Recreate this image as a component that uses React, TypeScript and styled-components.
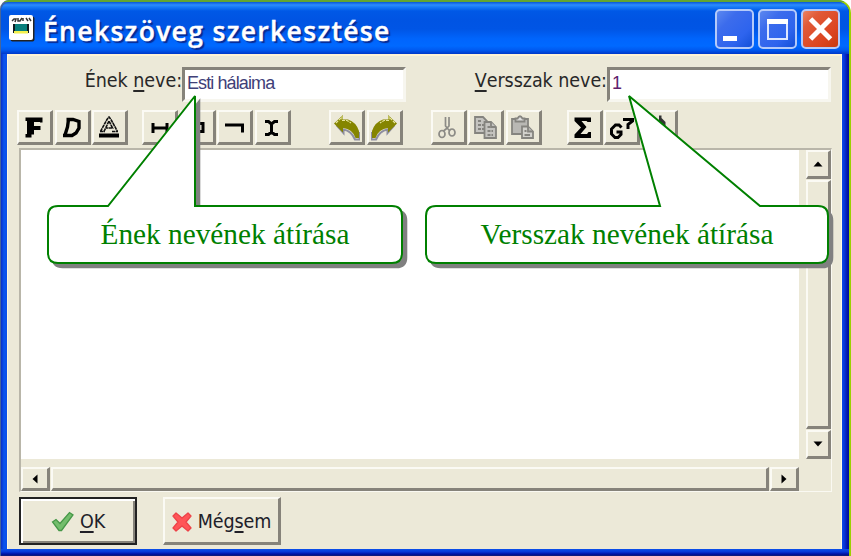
import React from "react";
import styled, { createGlobalStyle, css } from "styled-components";

const FACE = "#ece9d8";
const SHADE = "#86837a";

const GlobalStyle = createGlobalStyle`
  * { box-sizing: border-box; }
  body { margin: 0; overflow: hidden; background: #fff; }
  svg { display: block; flex: none; }
`;

const raised = css`
  background: ${FACE};
  border: solid;
  border-width: 2px 3px 3px 2px;
  border-color: #fbfaf4 ${SHADE} ${SHADE} #fbfaf4;
`;

const Frame = styled.div`
  position: relative;
  width: 851px;
  height: 556px;
  padding: 2px 2px 0 1px;
  background: linear-gradient(90deg, #47659a 0 50%, #9bd000 50%);
  border-radius: 9px 13px 0 0;
  overflow: hidden;
  &::before {
    content: "";
    position: absolute;
    inset: 0 0 auto 0;
    height: 2px;
    background: #63a532;
  }
`;

const Window = styled.div`
  position: relative;
  height: 554px;
  padding: 0 7px 7px 6px;
  border-radius: 9px 11px 0 0;
  background: linear-gradient(90deg, #0830c8 0, #0a55ee 3px, #0b50e8 6px, #0b50e8 50%, #0a50e8 840px, #0738de 843px, #0010a0 847px);
  overflow: hidden;
  &::after {
    content: "";
    position: absolute;
    inset: auto 0 0 0;
    height: 7px;
    background: linear-gradient(#0a50ea, #0838d8 40%, #0010a0 75%, #122070);
  }
`;

const TitleBar = styled.header`
  display: flex;
  align-items: center;
  height: 52px;
  margin: 0 -7px 0 -6px;
  padding: 1px 9px 0 8px;
  background: linear-gradient(#0857d8 0, #2c8cff 3px, #177af8 5px, #0058e6 9px, #0054e3 18px, #0055e5 27px, #0065fd 37px, #0069ff 44px, #005af0 48px, #0038c8 52px);
`;

const Title = styled.h1`
  flex: 1;
  margin: 4px 0 0 8px;
  font: 600 26.5px/40px "Open Sans", "Noto Sans", sans-serif;
  letter-spacing: 1.33px;
  color: #fff;
  -webkit-text-stroke: 0.4px #fff;
  text-shadow: 2px 2px 1px #082a92;
  white-space: nowrap;
`;

const WindowButtons = styled.div`
  display: flex;
  gap: 4px;
`;

const WindowButton = styled.button<{ $close?: boolean }>`
  display: grid;
  place-items: center;
  width: 39px;
  height: 40px;
  padding: 0;
  border: 2px solid #b4cafa;
  border-radius: 5px;
  background: ${(p) =>
    p.$close
      ? "linear-gradient(135deg, #ea8262 0, #e15a38 25%, #dc4520 70%, #c83a10 100%)"
      : "linear-gradient(135deg, #5c88f0 0, #3c6cec 30%, #2e64ee 70%, #1450d8 100%)"};
`;

const Client = styled.main`
  height: 495px;
  padding: 13px 9px 0 11px;
  border-top: 2px solid #fff3d5;
  border-left: 1px solid #fff8df;
  border-right: 1px solid #fff8df;
  background: ${FACE};
`;

const Fields = styled.div`
  display: flex;
  height: 35px;
  margin-top: -2px;
`;

const Field = styled.div<{ $lead: number }>`
  display: flex;
  padding-left: ${(p) => p.$lead}px;
`;

const Label = styled.label<{ $width: number }>`
  display: flex;
  justify-content: flex-end;
  white-space: pre;
  width: ${(p) => p.$width}px;
  font: 19.5px/27px "DejaVu Sans Condensed", "DejaVu Sans", sans-serif;
  font-stretch: condensed;
  letter-spacing: -0.05px;
  color: #282828;
`;

const Key = styled.span`
  text-decoration: underline;
  text-decoration-thickness: 1.5px;
  text-underline-offset: 3px;
  text-decoration-skip-ink: none;
`;

const TextBox = styled.div<{ $ink: string }>`
  width: 224px;
  height: 35px;
  padding: 0 0 0 2px;
  border: 3px solid;
  border-color: ${SHADE} #f7f6ef #f7f6ef ${SHADE};
  background: #fff;
  color: ${(p) => p.$ink};
  font: 18px/27px "Liberation Sans", Arial, sans-serif;
  letter-spacing: -0.9px;
  white-space: nowrap;
`;

const Toolbar = styled.div`
  display: flex;
  height: 35px;
  margin: 8px 0 3px -2px;
`;

const Group = styled.div<{ $before?: number }>`
  display: flex;
  gap: 1.5px;
  margin-left: ${(p) => p.$before ?? 0}px;
`;

const Tool = styled.button`
  ${raised}
  display: grid;
  place-items: center;
  width: 36px;
  height: 35px;
  padding: 0;
`;

const Editor = styled.section`
  display: grid;
  grid-template-columns: 778px 25px;
  grid-template-rows: 309px 24px;
  gap: 8px 7px;
  width: 813px;
  height: 344px;
  border: 2px solid;
  border-color: #b9b6a9 #faf9f2 #faf9f2 #b9b6a9;
  border-right-width: 1px;
  border-bottom-width: 1px;
`;

const Paper = styled.div`
  background: #fff;
`;

const ScrollBar = styled.div<{ $vertical?: boolean }>`
  display: flex;
  flex-direction: ${(p) => (p.$vertical ? "column" : "row")};
  gap: 1px;
`;

const ScrollButton = styled.button`
  ${raised}
  display: grid;
  place-items: center;
  flex: 0 0 29px;
  padding: 0;
`;

const Thumb = styled.div`
  ${raised}
  flex: 1;
`;

const Actions = styled.footer`
  display: flex;
  gap: 26px;
  margin-top: 5px;
`;

const Action = styled.button<{ $default?: boolean }>`
  ${raised}
  display: flex;
  align-items: center;
  justify-content: center;
  gap: 6px;
  width: 118px;
  height: 48px;
  padding: 2px 0 0;
  font: 19.5px/24px "DejaVu Sans Condensed", "DejaVu Sans", sans-serif;
  font-stretch: condensed;
  letter-spacing: -0.1px;
  color: #202028;
  ${(p) =>
    p.$default &&
    css`
      border: 2px solid #222;
      box-shadow: inset 2px 2px #fff, inset -2px -2px ${SHADE};
    `}
`;

const Callout = styled.aside<{ $left: number; $width: number }>`
  position: absolute;
  left: ${(p) => p.$left}px;
  top: 206px;
  width: ${(p) => p.$width}px;
  height: 57px;
  font: 29.3px/57px "Liberation Serif", "Times New Roman", serif;
  color: #008000;
  text-align: center;
  white-space: nowrap;
`;

const Balloon = styled.svg`
  position: absolute;
  left: 0;
  top: -116px;
  overflow: visible;
`;

const CalloutText = styled.span`
  position: relative;
`;

type CalloutProps = {
  left: number; width: number; tip: number; base: [number, number]; children: React.ReactNode;
};

function CalloutBox({ left, width, tip, base, children }: CalloutProps) {
  const d = `M10 116H${base[0]}L${tip} 6L${base[1]} 116H${width - 10}Q${width} 116 ${width} 126V163Q${width} 173 ${width - 10} 173H10Q0 173 0 163V126Q0 116 10 116Z`;
  return (
    <Callout $left={left} $width={width}>
      <Balloon width={width} height={174}>
        <path d={d} fill="#808080" stroke="#808080" strokeWidth="1.6" transform="translate(4.5 4.5)" />
        <path d={d} fill="#fff" stroke="#008000" strokeWidth="2" strokeLinejoin="miter" strokeMiterlimit="3" />
      </Balloon>
      <CalloutText>{children}</CalloutText>
    </Callout>
  );
}

const shapes: Record<string, React.ReactNode> = {
  bold: <path d="M3.500 3.500H20.500V8.500H18V8H12V12H18.500V16H12V20.500H9.500V23.500H3.500V20H5V7H3.500Z" fill="#000" />,
  italic: <path d="M7.500 5.500H14L20 7.500V14L17 19L13 21.500H4M9.500 5.500L8.500 13L6 21" fill="none" stroke="#000" strokeWidth="3.400" />,
  color: (
    <g fill="none" stroke="#111" strokeWidth="1.6">
      <path d="M3.500 17.500L10 5.500L12 3L14 5.500L20.500 17.500M7 17.500L12 7L15.500 14H9M3 17.500H8M15 17.500H21" strokeDasharray="3.500 .5" />
      <path d="M2 19.500H22V23.500H2Z" fill="#000" stroke="none" />
    </g>
  ),
  link: <path d="M6 9V19M6 14H20M20 9V19" fill="none" stroke="#000" strokeWidth="3" />,
  box: <path d="M3 14H10M10 9.500H19V17.500H10Z" fill="none" stroke="#000" strokeWidth="3" />,
  corner: <path d="M3 11H20.500V18.500" fill="none" stroke="#000" strokeWidth="3" />,
  beam: <path d="M6 7.500H9.500L12.500 10L15.500 7.500H19M6 20.500H9.500L12.500 18L15.500 20.500H19M12.500 9.500V18.500" fill="none" stroke="#000" strokeWidth="3" />,
  undo: (
    <>
      <path d="M2.500 11L9.500 19V15.500Q17.500 17 21 25.500H25.500V18" fill="none" stroke="#8e8ea0" strokeWidth="2" />
      <path d="M0 9.500L9 1V5.500H14Q22 8 25 17V24H21.500Q18.500 15 9 14V18.500Z" fill="#858500" />
      <path d="M2 9L8 3V6.500H13L17 9" fill="none" stroke="#e6e49a" strokeWidth="1.2" strokeDasharray="3 1" />
    </>
  ),
  cut: (
    <g fill="none" stroke="#8c8b86" strokeWidth="1.7">
      <path d="M10.500 3V12L13 15L15 17M14 3V12L11 15L8.500 17" />
      <ellipse cx="7" cy="20" rx="3" ry="3.500" /><ellipse cx="17" cy="18.500" rx="3" ry="3.500" />
    </g>
  ),
  copy: (
    <g fill="#c4c3bf" stroke="#85847f" strokeWidth="1.8">
      <path d="M2 3H10L14 7V19H2Z" /><path d="M5 7H8M5 11H11M5 15H11" strokeDasharray="3 1" />
      <path d="M11.500 8H18L23 13V24H11.500Z" /><path d="M14.500 13H17M14.500 17H20M14.500 21H20" strokeDasharray="3 1" /><path d="M18 8V13H23" />
    </g>
  ),
  paste: (
    <g fill="#b9b8b4" stroke="#85847f" strokeWidth="1.8">
      <path d="M2 5H18V20H2Z" /><path d="M5.500 7.500V4.500H7.500Q10 0 12.500 4.500H14.500V7.500Z" fill="#ddd" />
      <path d="M12 12.500H18L23 17.500V24H12Z" fill="#d2d1cc" /><path d="M14.500 17H16.500M14.500 21H20M18 12.500V17.500H23" />
    </g>
  ),
  sum: <path d="M3.500 3.500H20V8H16.500L15.500 7H10.500L15.500 13L9.500 20H16L17.500 18H20V24H3.500V20.500L10 13.500L3.500 7Z" fill="#000" />,
  chord: (
    <g fill="none" stroke="#000" strokeWidth="3">
      <path d="M12.500 13.500L10 11H6.500L2.500 15V20L6 23.500H9L12 20.500V18H7.500" />
      <path d="M14 5.500H23.500V7L19 10.500V15" />
    </g>
  ),
  note: <path d="M13 1.500H15.500V4L19.500 8V13L16 11V20Q9 23 7 18Q8 14 13 15Z" fill="#333" />,
};

const ToolButton = ({ name, flip }: { name: string; flip?: boolean }) => (
  <Tool aria-label={flip ? "redo" : name}>
    <svg width="26" height="27" viewBox="0 0 26 27">
      <g transform={flip ? "translate(26 0) scale(-1 1)" : undefined}>{shapes[name]}</g>
    </svg>
  </Tool>
);

const Arrow = ({ turn }: { turn: number }) => (
  <svg width="12" height="12" viewBox="0 0 12 12">
    <path d="M1.500 8.500L6 3.500L10.500 8.500Z" fill="#000" transform={`rotate(${turn} 6 6)`} />
  </svg>
);

export default function App() {
  return (
    <>
      <GlobalStyle />
      <Frame>
        <Window>
          <TitleBar>
            <svg width="26" height="27" viewBox="0 0 26 27">
              <rect x="1.500" y="1.500" width="24" height="25" rx="2" fill="#222" />
              <rect x="0" y="0" width="24" height="25" rx="2" fill="#fff" />
              <path d="M3 6L5 4H7L6 7M9 3V6H11L13 3M14 3V6M17 3L19 6M20 3L22 6" fill="none" stroke="#333" strokeWidth="1.500" />
              <path d="M4 9H20V18H4Z" fill="#101c20" />
              <path d="M6 9H18V17H6Z" fill="#087f7c" /><path d="M5 16H19V18.500H5Z" fill="#f3f04d" />
            </svg>
            <Title>Énekszöveg szerkesztése</Title>
            <WindowButtons>
              <WindowButton aria-label="Minimize">
                <svg width="35" height="36"><path d="M6 25H20V30H6Z" fill="#fff" /></svg>
              </WindowButton>
              <WindowButton aria-label="Maximize">
                <svg width="35" height="36"><path d="M8 9H27V28H8Z" fill="none" stroke="#dce6ff" strokeWidth="2" /><path d="M7 8H28V13H7Z" fill="#fff" /></svg>
              </WindowButton>
              <WindowButton $close aria-label="Close">
                <svg width="35" height="36"><path d="M7.500 8L27.500 28M27.500 8L7.500 28" stroke="#fff" strokeWidth="5" /></svg>
              </WindowButton>
            </WindowButtons>
          </TitleBar>
          <Client>
            <Fields>
              <Field $lead={55}>
                <Label $width={108}>Ének <Key>n</Key>eve:</Label>
                <TextBox $ink="#404078">Esti hálaima</TextBox>
              </Field>
              <Field $lead={61}>
                <Label $width={140}><Key>V</Key>ersszak neve:</Label>
                <TextBox $ink="#60206c">1</TextBox>
              </Field>
            </Fields>
            <Toolbar>
              <Group><ToolButton name="bold" /><ToolButton name="italic" /><ToolButton name="color" /></Group>
              <Group $before={14}><ToolButton name="link" /><ToolButton name="box" /><ToolButton name="corner" /><ToolButton name="beam" /></Group>
              <Group $before={38.5}><ToolButton name="undo" /><ToolButton name="undo" flip /></Group>
              <Group $before={28}><ToolButton name="cut" /><ToolButton name="copy" /><ToolButton name="paste" /></Group>
              <Group $before={25}><ToolButton name="sum" /><ToolButton name="chord" /><ToolButton name="note" /></Group>
            </Toolbar>
            <Editor>
              <Paper />
              <ScrollBar $vertical>
                <ScrollButton aria-label="Up"><Arrow turn={0} /></ScrollButton>
                <Thumb />
                <ScrollButton aria-label="Down"><Arrow turn={180} /></ScrollButton>
              </ScrollBar>
              <ScrollBar>
                <ScrollButton aria-label="Left"><Arrow turn={-90} /></ScrollButton>
                <Thumb />
                <ScrollButton aria-label="Right"><Arrow turn={90} /></ScrollButton>
              </ScrollBar>
            </Editor>
            <Actions>
              <Action $default>
                <svg width="23" height="22" viewBox="0 0 23 22"><path d="M1.500 11L5 8.500L9 12.500L18.500 1.500L22 4L10.500 19.500H8Z" fill="#73bd6c" stroke="#459747" strokeWidth="1.300" /></svg>
                <span><Key>O</Key>K</span>
              </Action>
              <Action>
                <svg width="20" height="22" viewBox="1 0 20 22"><path d="M5 2L11 7L17 2L20 5L15 11L20 17L17 20L11 15L5 20L2 17L7 11L2 5Z" fill="#ff5557" stroke="#ed4248" strokeWidth="1.300" strokeLinejoin="round" /></svg>
                <span>Még<Key>s</Key>em</span>
              </Action>
            </Actions>
          </Client>
        </Window>
        <CalloutBox left={48} width={354} tip={147} base={[60, 147]}>Ének nevének átírása</CalloutBox>
        <CalloutBox left={426} width={402} tip={203} base={[234, 334]}>Versszak nevének átírása</CalloutBox>
      </Frame>
    </>
  );
}
